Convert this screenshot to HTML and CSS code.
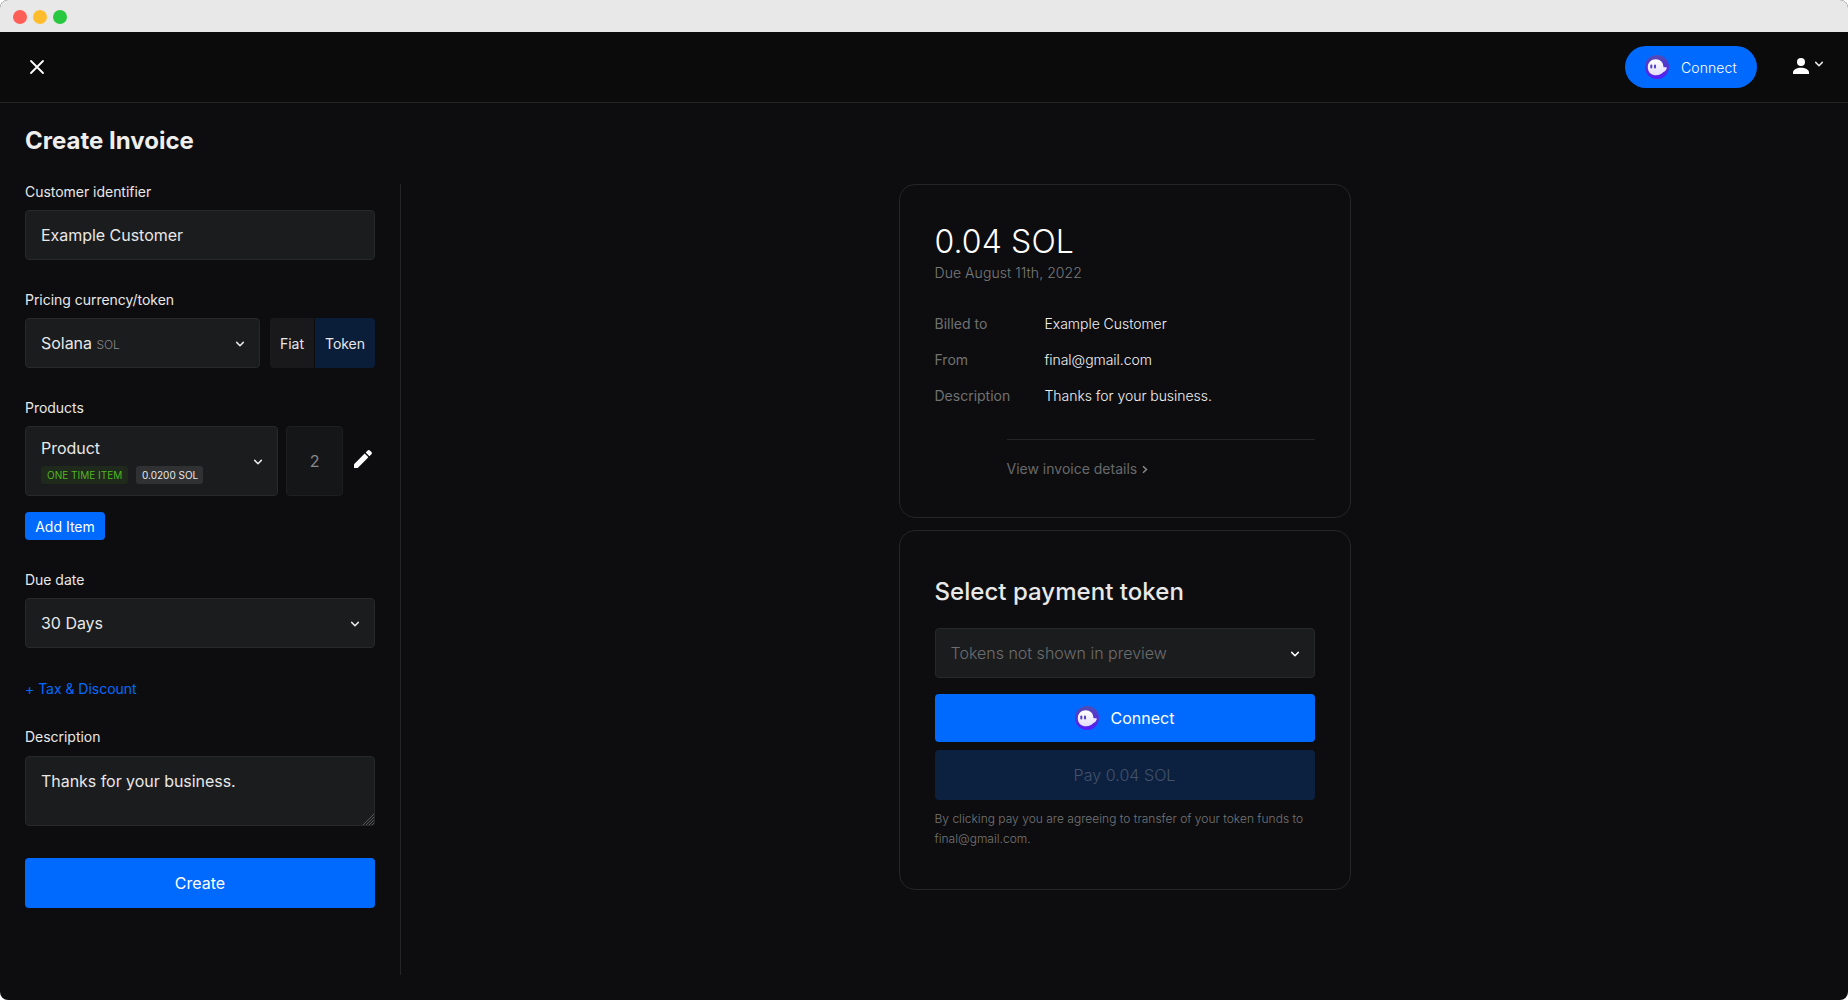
FILE: index.html
```html
<!DOCTYPE html>
<html lang="en">
<head>
<meta charset="utf-8">
<title>Create Invoice</title>
<link rel="stylesheet" href="styles.css">
</head>
<body>
<svg class="defs" width="0" height="0" aria-hidden="true">
  <defs>
    <linearGradient id="ring" x1="0" y1="0" x2="0" y2="1"><stop offset="0" stop-color="#534bb1"/><stop offset="1" stop-color="#551bf9"/></linearGradient>
    <linearGradient id="body" x1="0" y1="0" x2="0" y2="1"><stop offset="0" stop-color="#fff"/><stop offset="1" stop-color="#e2dcfb"/></linearGradient>
    <symbol id="ghost" viewBox="0 0 24 24">
      <circle cx="12" cy="12" r="12" fill="url(#ring)"/>
      <path d="M2.8 12.2C2.8 7.6 6.2 4.2 10.8 4.2c4.300 0 7.300 3 7.600 7.200.1.700.4.900 1 .9h1.800c.5 0 .7.300.6.700-.6 2.200-2 3.500-3.400 4.100-1.500 2-4 3.200-7.200 3.200-5 0-8.400-3.200-8.400-8.100z" fill="url(#body)"/>
      <rect x="5.300" y="9.600" width="2" height="3.800" rx="1" fill="#5240c0"/>
      <rect x="9" y="9.600" width="2" height="3.800" rx="1" fill="#5240c0"/>
    </symbol>
    <symbol id="chevron" viewBox="0 0 10 10">
      <path d="M1.700 3.400 5 6.700 8.300 3.400" fill="none" stroke="currentColor" stroke-width="1.500" stroke-linecap="round" stroke-linejoin="round"/>
    </symbol>
  </defs>
</svg>
<div class="window">
  <div class="titlebar"><i class="dot red"></i><i class="dot yellow"></i><i class="dot green"></i></div>
  <header class="header">
    <svg class="close" width="16" height="16" viewBox="0 0 16 16"><path d="M2 2 14 14M14 2 2 14" stroke="#fff" stroke-width="1.800" stroke-linecap="round"/></svg>
    <div class="header-right">
      <button class="pill"><svg width="24" height="24"><use href="#ghost"/></svg><span>Connect</span></button>
      <div class="account">
        <svg width="16" height="16" viewBox="0 0 16 16" fill="#fff"><circle cx="8" cy="4" r="4"/><path d="M0 16v-1.500C0 11.500 4 9.800 8 9.800s8 1.700 8 4.700V16z"/></svg>
        <svg class="account-arrow" width="10" height="10"><use href="#chevron"/></svg>
      </div>
    </div>
  </header>
  <main class="page">
    <h1 class="title">Create Invoice</h1>
    <div class="columns">
      <form class="form">
        <div class="field">
          <label class="label">Customer identifier</label>
          <div class="box">Example Customer</div>
        </div>
        <div class="field">
          <label class="label">Pricing currency/token</label>
          <div class="row">
            <div class="box currency"><span>Solana <small class="symbol">SOL</small></span><svg class="chev" width="10" height="10"><use href="#chevron"/></svg></div>
            <div class="segments"><span class="segment fiat">Fiat</span><span class="segment token">Token</span></div>
          </div>
        </div>
        <div class="field">
          <label class="label">Products</label>
          <div class="row products">
            <div class="box product">
              <div class="product-info"><div class="product-name">Product</div><div class="tags"><span class="tag once">ONE TIME ITEM</span><span class="tag price">0.0200 SOL</span></div></div>
              <svg class="chev" width="10" height="10"><use href="#chevron"/></svg>
            </div>
            <div class="quantity">2</div>
            <svg class="pencil" width="18" height="18" viewBox="0 0 18 18" fill="#fff"><path d="M0 14.300 10.700 3.600l3.700 3.700L3.700 18H0z"/><path d="M11.700 2.600 13.700.6c.7-.7 1.500-.7 2.200 0l1.500 1.500c.7.700.7 1.500 0 2.200l-2 2z"/></svg>
          </div>
          <button type="button" class="add">Add Item</button>
        </div>
        <div class="field due">
          <label class="label">Due date</label>
          <div class="box">30 Days<svg class="chev" width="10" height="10"><use href="#chevron"/></svg></div>
        </div>
        <a class="tax">+ Tax &amp; Discount</a>
        <label class="label description-label">Description</label>
        <div class="textarea-wrap">
          <textarea class="textarea">Thanks for your business.</textarea>
          <svg class="grip" width="11" height="11" viewBox="0 0 11 11"><path d="M0 11 11 0M3 11l8-8M6 11l5-5M9 11l2-2" stroke="#66676a" stroke-width=".8"/></svg>
        </div>
        <button type="button" class="create">Create</button>
      </form>
      <section class="preview">
        <article class="card summary">
          <div class="amount">0.04 SOL</div>
          <div class="due-on">Due August 11th, 2022</div>
          <dl class="details">
            <dt>Billed to</dt><dd>Example Customer</dd>
            <dt>From</dt><dd>final@gmail.com</dd>
            <dt>Description</dt><dd>Thanks for your business.</dd>
          </dl>
          <div class="more"><span>View invoice details</span><svg width="6" height="9" viewBox="0 0 6 9"><path d="M1 1.200 4.500 4.500 1 7.800" fill="none" stroke="#88898a" stroke-width="1.500"/></svg></div>
        </article>
        <article class="card payment">
          <h2 class="payment-title">Select payment token</h2>
          <div class="box placeholder"><span>Tokens not shown in preview</span><svg class="chev" width="10" height="10"><use href="#chevron"/></svg></div>
          <button class="connect"><svg width="24" height="24"><use href="#ghost"/></svg><span>Connect</span></button>
          <button class="pay">Pay 0.04 SOL</button>
          <p class="terms">By clicking pay you are agreeing to transfer of your token funds to final@gmail.com.</p>
        </article>
      </section>
    </div>
  </main>
</div>
</body>
</html>
```

FILE: styles.css
```css
* { box-sizing: border-box; }
body { margin: 0; background: #fff; font-family: Inter, "Liberation Sans", sans-serif; font-size: 14px; line-height: 22px; color: #e8e8e8; }
button { border: 0; padding: 0; color: #fff; font-family: inherit; background: #006aff; border-radius: 4px; }
svg { display: block; flex: none; }
.defs { position: absolute; }
.window { height: 1000px; background: #0d0d0f; border-radius: 8px; overflow: hidden; display: flex; flex-direction: column; }
.titlebar { height: 32px; flex: none; background: #e8e8e8; display: flex; align-items: center; gap: 6px; padding: 2px 0 0 13px; }
.dot { width: 14px; height: 14px; border-radius: 50%; }
.red { background: #ff5f57; }
.yellow { background: #ffbd2e; }
.green { background: #28c840; }
.header { height: 71px; flex: none; background: #0b0b0b; border-bottom: 1px solid #242527; display: flex; align-items: center; justify-content: space-between; padding: 0 24px 0 29px; }
.close { margin-top: -1px; }
.header-right { display: flex; align-items: center; gap: 36px; }
.pill { width: 132px; height: 42px; border-radius: 21px; display: flex; align-items: center; gap: 12px; padding-left: 20px; font-size: 14px; font-weight: 300; letter-spacing: .1px; }
.pill span { padding-top: 1px; }
.account { display: flex; gap: 5px; margin-top: -2px; }
.account-arrow { margin-top: 1px; }
.page { padding: 25px 0 25px 25px; flex: 1; display: flex; flex-direction: column; }
.title { margin: 0; height: 56px; font-size: 24px; line-height: 26px; font-weight: 700; color: #eee; }
.columns { flex: 1; display: flex; }
.form { width: 376px; padding-right: 25px; border-right: 1px solid #242527; display: flex; flex-direction: column; letter-spacing: -.03px; }
.field { margin-bottom: 29px; }
.field:first-child { margin-top: -3px; }
.label { display: block; height: 22px; margin-bottom: 7px; font-weight: 400; }
.box { height: 50px; background: #1b1c1e; border: 1px solid #27282a; border-radius: 4px; padding: 0 14px 0 15px; font-size: 16px; display: flex; align-items: center; justify-content: space-between; }
.chev { margin-top: 2px; }
.row { display: flex; }
.currency { width: 235px; margin-right: 10px; }
.symbol { font-size: 12px; line-height: 1; font-weight: 300; color: #88898a; }
.segments { display: flex; gap: 1px; border-radius: 4px; overflow: hidden; }
.segment { display: flex; align-items: center; justify-content: center; padding-top: 1px; }
.fiat { width: 44px; background: #19191b; }
.token { width: 60px; background: #0a1d39; }
.products { align-items: center; }
.product { width: 253px; height: 70px; }
.product-info { margin-top: -3px; }
.product-name { line-height: 24px; margin-bottom: 6px; }
.tags { display: flex; gap: 8px; font-size: 10px; line-height: 18px; letter-spacing: 0; white-space: nowrap; }
.tag { border-radius: 3px; padding: 0 6px; }
.once { width: 87px; background: #1f291c; color: #52b71f; }
.price { width: 67px; background: #303133; }
.quantity { width: 57px; height: 70px; margin: 0 11px 0 8px; background: #151618; border: 1px solid #1e1f21; border-radius: 4px; display: flex; align-items: center; justify-content: center; font-size: 16px; color: #88898a; }
.pencil { margin-top: -4px; }
.add { display: block; width: 80px; height: 28px; margin-top: 16px; font-size: 14px; padding-top: 1px; }
.due { margin-bottom: 30px; }
.tax { color: #006aff; height: 22px; margin-bottom: 26px; }
.description-label { margin-bottom: 8px; }
.textarea-wrap { position: relative; height: 70px; margin-bottom: 32px; }
.textarea { display: block; width: 100%; height: 70px; margin: 0; padding: 12px 15px; background: #1b1c1e; border: 1px solid #27282a; border-radius: 4px; font: 400 16px/24px Inter, "Liberation Sans", sans-serif; letter-spacing: -.04px; color: inherit; resize: none; }
.grip { position: absolute; right: 1px; bottom: 1px; }
.create { height: 50px; font-size: 16px; }
.preview { flex: 1; display: flex; flex-direction: column; align-items: center; gap: 12px; }
.card { width: 452px; border: 1px solid #242527; border-radius: 16px; padding: 35px; }
.summary { height: 334px; font-weight: 300; }
.amount { font-size: 32px; line-height: 42px; font-weight: 300; letter-spacing: .1px; padding-top: 1px; height: 42px; color: #fff; }
.due-on { color: #7a7b7c; letter-spacing: .06px; }
.details { display: grid; grid-template-columns: 110px 1fr; row-gap: 14px; margin: 29px 0 0; }
.details dt { color: #707172; font-weight: 400; }
.details dd { margin: 0; color: #f2f2f2; letter-spacing: -.04px; }
.more { margin: 32px 0 0 72px; border-top: 1px solid #242527; padding-top: 18px; color: #68696a; font-weight: 400; display: flex; align-items: center; gap: 5px; }
.payment { height: 360px; font-weight: 300; }
.payment-title { margin: 11px 0 21px; font-size: 24px; line-height: 30px; font-weight: 500; letter-spacing: .04px; }
.placeholder { color: #6c6d6e; }
.placeholder .chev { color: #fff; }
.connect { width: 100%; height: 48px; margin: 16px 0 8px; display: flex; align-items: center; justify-content: center; gap: 12px; font-size: 16px; }
.pay { width: 100%; height: 50px; background: #0c2040; color: #435269; font-size: 16px; font-weight: 300; letter-spacing: .04px; }
.terms { margin: 9px 0 0; font-size: 12px; line-height: 20px; color: #747576; letter-spacing: .015px; }
```
